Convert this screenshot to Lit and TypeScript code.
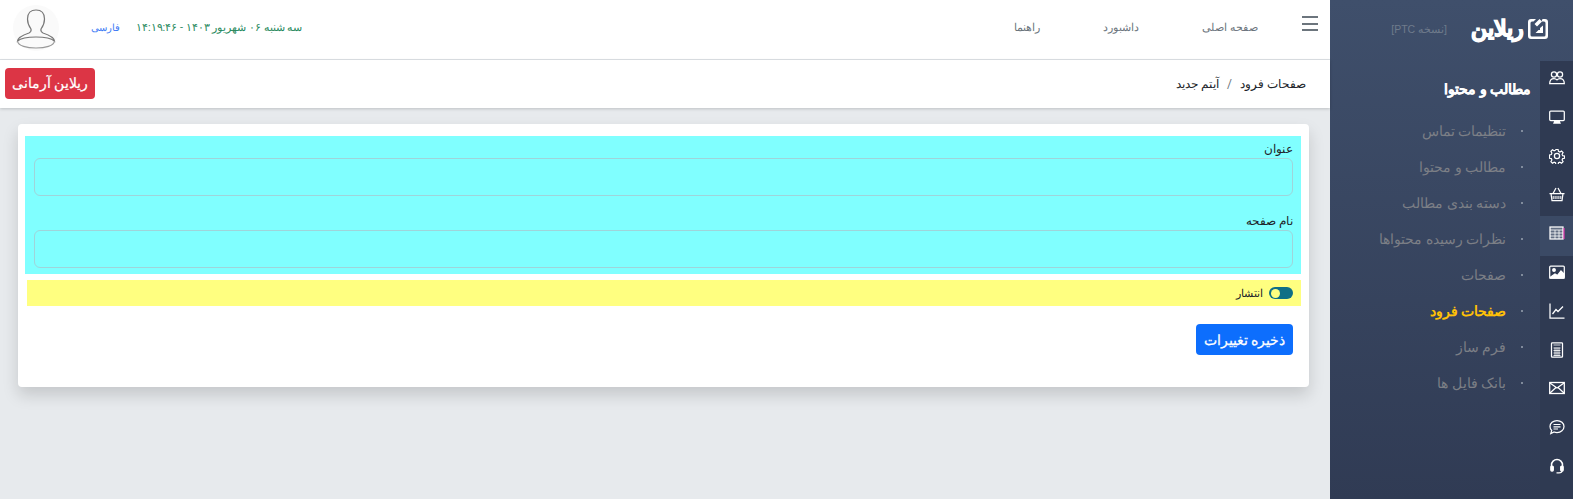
import { LitElement, html, css, svg } from "lit";
import { customElement } from "lit/decorators.js";

const ic = (body: unknown) => html`<svg class="ic" viewBox="0 0 16 16" fill="none" stroke="#fff" stroke-width="1.25">${body}</svg>`;
const icons = [
  svg`<circle cx="5" cy="4.5" r="2.6"/><circle cx="11" cy="4.5" r="2.6"/><path d="M.7 13.5c0-3 1.7-5 4.3-5 1.3 0 2.3.5 3 1.3.7-.8 1.7-1.3 3-1.3 2.6 0 4.3 2 4.3 5z"/>`,
  svg`<rect x=".7" y="2" width="14.6" height="9.6" rx="1"/><path d="M5 14h6l-1-2.400H6z" fill="#fff"/>`,
  svg`<circle cx="8" cy="8" r="2.600"/><path d="M6.800 1h2.400l.4 2 1.500.7 1.800-1.100 1.700 1.700-1.100 1.800.6 1.500 2 .4v2.400l-2 .4-.6 1.500 1.100 1.800-1.700 1.700-1.800-1.100-1.500.6-.4 2H6.800l-.4-2-1.500-.6-1.800 1.100-1.700-1.700 1.100-1.800-.6-1.500-2-.4V6.800l2-.4.6-1.500L1.400 3l1.700-1.700 1.800 1.100 1.500-.7z" transform="translate(.6 .6) scale(.925)"/>`,
  svg`<path d="M.5 7.500h15M2 7.500l1 7h10l1-7M4 7.500 7 2M12 7.500 9 2"/><path d="M4.200 10v3M6.100 10v3M8 10v3M9.900 10v3M11.800 10v3" stroke-width="1"/>`,
  svg`<rect x="1" y="2" width="13" height="12" fill="#fff" fill-opacity=".2"/><path d="M1 5h13M1 8h13M1 11h13M6 5v9M10 5v9" stroke-width=".8"/><path d="M15 3v11" stroke="#f3b" stroke-width="1"/>`,
  svg`<rect x=".7" y="2" width="14.600" height="12" rx="1"/><circle cx="5" cy="6" r="1.300" fill="#fff"/><path d="M1 13.500 6 10l2.500 1.500L12 7l3 3v4H1z" fill="#fff"/>`,
  svg`<path d="M1 .5v14.500h14.500"/><path d="M3.500 11 7 6.500l2 2L14 3.500"/>`,
  svg`<rect x="2.500" y=".8" width="11" height="14.400" rx=".8"/><path d="M4.500 6h7M4.500 8.500h7M4.500 11h7M4.500 13.500h7M6 5.500V14M8 5.500V14M10 5.500V14M4.500 3h7" stroke-width=".8"/>`,
  svg`<rect x=".7" y="2.500" width="14.600" height="11" stroke-width="1.300"/><path d="M1 3l7 5 7-5M1 13l6-5.500M15 13 9 7.500"/>`,
  svg`<path d="M8 1.500c3.900 0 7 2.700 7 6s-3.100 6-7 6c-1 0-2-.2-2.900-.5L1.800 14.500l.9-3C1.600 10.400 1 9 1 7.500c0-3.300 3.100-6 7-6z"/><path d="M4.500 5.500h7M4.500 7.800h7M4.500 10h4.500" stroke-width="1.200"/>`,
  svg`<path d="M2.500 9V7a5.500 5.500 0 0 1 11 0v2" stroke-width="1.500"/><rect x="1.800" y="8" width="2.500" height="5" rx="1" fill="#fff"/><rect x="11.700" y="8" width="2.500" height="5" rx="1" fill="#fff"/><path d="M13 13c0 1.200-1.500 1.800-3 1.800H7.500" stroke-width="1.200"/>`,
];
const items = ["تنظیمات تماس", "مطالب و محتوا", "دسته بندی مطالب", "نظرات رسیده محتواها", "صفحات", "صفحات فرود", "فرم ساز", "بانک فایل ها"];

@customElement("app-root")
export class AppRoot extends LitElement {
  static styles = css`
    :host { display: block; height: 100vh; overflow: hidden; font-family: Roboto, "Noto Sans", sans-serif; }
    * { box-sizing: border-box; }
    .app { display: flex; direction: rtl; height: 100%; background: #e7eaed; }
    .side { width: 243px; flex: none; display: flex; flex-direction: column; background: linear-gradient(#3f4f6b, #303b54); }
    .brand { height: 61px; display: flex; align-items: center; padding: 0 24px 4px 0; gap: 2px; }
    .brand svg { width: 22px; height: 22px; flex: none; }
    .brand b { color: #fff; font-size: 22px; font-weight: 700; line-height: 22px; -webkit-text-stroke: 1.2px #fff; width: 56px; text-align: center; white-space: nowrap; }
    .ver { color: #6f7b8c; font-size: 10.500px; margin-right: 20px; font-family: "Liberation Sans", sans-serif; }
    .body { flex: 1; display: flex; min-height: 0; }
    .rail { width: 33px; flex: none; background: #2f3a52; }
    .cell { height: 38.800px; padding-top: 9px; display: flex; justify-content: center; }
    .cell.on { background: #3b4a65; height: 40px; margin-bottom: -1.200px; position: relative; }
    .ic { width: 16px; height: 16px; }
    .menu { flex: 1; padding: 19px 9px 0 0; }
    .title { color: #fff; font-weight: 700; font-size: 13.500px; line-height: 18px; margin-bottom: 15px; -webkit-text-stroke: .25px #fff; }
    .item { height: 36px; display: flex; align-items: center; gap: 15px; padding-right: 8px; font-size: 14px; color: #7c7f86; }
    .item i { width: 2px; height: 2px; background: #9aa3b0; border-radius: 50%; }
    .item.on { color: #ffc107; font-weight: 700; }
    .main { flex: 1; min-width: 0; display: flex; flex-direction: column; }
    .top { height: 60px; background: #fff; border-bottom: 1px solid #dee2e6; display: flex; align-items: center; padding: 0 12px 3px 13px; }
    .burger { width: 16px; height: 15px; margin-bottom: 9px; flex: none; display: flex; flex-direction: column; justify-content: space-between; }
    .burger span { height: 2px; background: #6c757d; }
    .nav { display: flex; gap: 63px; margin-right: 44px; margin-bottom: 2px; font-size: 11.200px; color: #6c757d; flex: 1; }
    .date { font-size: 10.800px; color: #2a8a5e; margin-bottom: 2px; }
    .lang { font-size: 10px; color: #3d7bf5; margin: 0 16px 2px; }
    .avatar { width: 46px; height: 46px; margin-right: 16px; flex: none; }
    .crumb { height: 48px; background: #fff; display: flex; align-items: center; justify-content: space-between; padding: 0 24px 0 5px; box-shadow: 0 1px 3px rgba(0,0,0,.18); font-size: 12px; color: #212529; }
    .crumb .sep { color: #6c757d; margin: 0 8px; }
    .red { background: #dc3545; color: #fff; border: 0; border-radius: 4px; width: 90px; height: 31px; margin-bottom: 2px; font: inherit; font-size: 13.500px; -webkit-text-stroke: .2px #fff; }
    .card { margin: 16px 21px 0 18px; height: 263px; background: #fff; border-radius: 4px; box-shadow: 0 .5rem 1rem rgba(0,0,0,.15); padding: 12px 8px 0 7px; }
    .cyan { background: #80ffff; height: 138px; padding: 5px 8px 0 9px; }
    .lbl { font-size: 11.500px; line-height: 16px; color: #212529; height: 17px; }
    .inp { height: 38px; border: 1px solid #9fd4da; border-radius: 6px; margin-bottom: 17px; }
    .inp.last { margin-bottom: 0; }
    .yellow { background: #ffff80; height: 26px; margin: 6px 0 0 2px; display: flex; align-items: center; gap: 6px; padding-right: 8px; font-size: 11px; color: #212529; }
    .sw { width: 24px; height: 12px; border-radius: 6px; background: #0f6f86; display: flex; justify-content: flex-end; padding: 1.500px 2px; }
    .sw span { width: 9px; height: 9px; border-radius: 50%; background: #ffff80; }
    .save { margin: 18px 8px 0 0; background: #0d6efd; color: #fff; border: 0; border-radius: 4px; width: 97px; height: 31px; font: inherit; font-size: 14px; -webkit-text-stroke: .25px #fff; display: block; }
  `;
  render() {
    return html`<div class="app">
      <aside class="side">
        <div class="brand">
          <svg viewBox="0 0 22 22"><path fill-rule="evenodd" d="M4 1h5L6.500 3.500H5A1.500 1.500 0 0 0 3.500 5v12A1.500 1.500 0 0 0 5 18.500h12a1.500 1.500 0 0 0 1.500-1.500V5A1.500 1.500 0 0 0 17 3.500h-2.500L15.500 1H18a3 3 0 0 1 3 3v14a3 3 0 0 1-3 3H4a3 3 0 0 1-3-3V4a3 3 0 0 1 3-3z" fill="#fff"/><path d="M7.500 6 12.500 1l2.500 2.500-5 5zM16 7.500V15H8.500l3-3H13V10z" fill="#fff"/></svg>
          <b>ریلاین</b>
          <span class="ver">[نسخه PTC]</span>
        </div>
        <div class="body">
          <div class="rail">${icons.map((b, i) => html`<div class="cell ${i === 4 ? "on" : ""}">${ic(b)}</div>`)}</div>
          <div class="menu">
            <div class="title">مطالب و محتوا</div>
            ${items.map((t, i) => html`<div class="item ${i === 5 ? "on" : ""}"><i></i><span>${t}</span></div>`)}
          </div>
        </div>
      </aside>
      <main class="main">
        <header class="top">
          <div class="burger"><span></span><span></span><span></span></div>
          <nav class="nav"><span>صفحه اصلی</span><span>داشبورد</span><span>راهنما</span></nav>
          <span class="date">سه شنبه ۰۶ شهریور ۱۴۰۳ - ۱۴:۱۹:۴۶</span>
          <span class="lang">فارسی</span>
          <svg class="avatar" viewBox="0 0 46 46" fill="none" stroke="#777" stroke-width="1.200"><circle cx="23" cy="23" r="23" fill="#fafafa" stroke="none"/><path d="M14.500 14C14.500 8 18 5 23 5s8.500 3 8.500 9c0 5-2 8-3.500 10-.5 2 0 3 2 4 6 2 11 4 11.500 8-3.500-3-11.500-4-18.500-4S8 33 4.500 36c.5-4 5.500-6 11.500-8 2-1 2.500-2 2-4-1.500-2-3.500-5-3.500-10z"/><path d="M4.500 36c.5 5 9.500 7 18.500 7s18-2 18.500-7" stroke="#999"/></svg>
        </header>
        <div class="crumb">
          <div><span>صفحات فرود</span><span class="sep">/</span><span>آیتم جدید</span></div>
          <button class="red">ریلاین آرمانی</button>
        </div>
        <section class="card">
          <div class="cyan">
            <div class="lbl">عنوان</div>
            <div class="inp"></div>
            <div class="lbl">نام صفحه</div>
            <div class="inp last"></div>
          </div>
          <div class="yellow"><div class="sw"><span></span></div><span>انتشار</span></div>
          <button class="save">ذخیره تغییرات</button>
        </section>
      </main>
    </div>`;
  }
}
